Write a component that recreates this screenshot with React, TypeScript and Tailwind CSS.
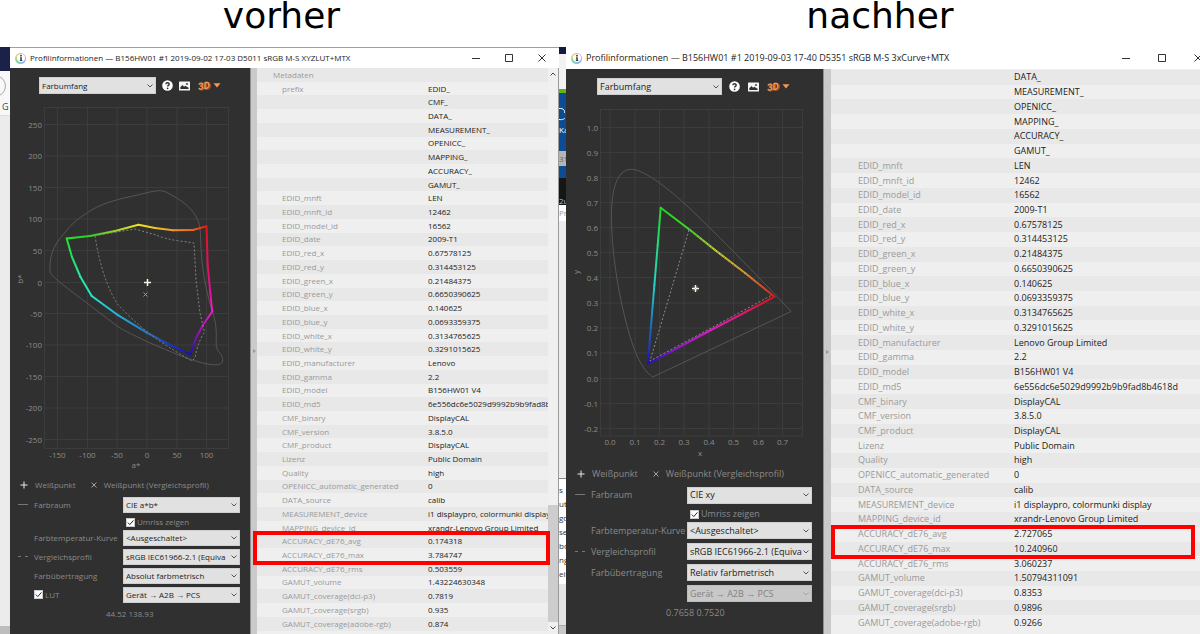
import React from 'react';
import clsx from 'clsx';

type MetaRow = [string, string];
type Point = [number, number];
type Variant = 'before' | 'after';

const PREFIXES = ['EDID_', 'CMF_', 'DATA_', 'MEASUREMENT_', 'OPENICC_', 'MAPPING_', 'ACCURACY_', 'GAMUT_'];

const EDID_ROWS: MetaRow[] = [
  ['EDID_mnft', 'LEN'],
  ['EDID_mnft_id', '12462'],
  ['EDID_model_id', '16562'],
  ['EDID_date', '2009-T1'],
  ['EDID_red_x', '0.67578125'],
  ['EDID_red_y', '0.314453125'],
  ['EDID_green_x', '0.21484375'],
  ['EDID_green_y', '0.6650390625'],
  ['EDID_blue_x', '0.140625'],
  ['EDID_blue_y', '0.0693359375'],
  ['EDID_white_x', '0.3134765625'],
  ['EDID_white_y', '0.3291015625'],
];

const PROFILE_ROWS: MetaRow[] = [
  ['EDID_gamma', '2.2'],
  ['EDID_model', 'B156HW01 V4'],
  ['EDID_md5', '6e556dc6e5029d9992b9b9fad8b4618d'],
  ['CMF_binary', 'DisplayCAL'],
  ['CMF_version', '3.8.5.0'],
  ['CMF_product', 'DisplayCAL'],
  ['Lizenz', 'Public Domain'],
  ['Quality', 'high'],
  ['OPENICC_automatic_generated', '0'],
  ['DATA_source', 'calib'],
  ['MEASUREMENT_device', 'i1 displaypro, colormunki display'],
  ['MAPPING_device_id', 'xrandr-Lenovo Group Limited'],
];

const BEFORE_ROWS: MetaRow[] = [
  ['Metadaten', ''],
  ...PREFIXES.map((prefix, i): MetaRow => [i === 0 ? 'prefix' : '', prefix]),
  ...EDID_ROWS,
  ['EDID_manufacturer', 'Lenovo'],
  ...PROFILE_ROWS,
  ['ACCURACY_dE76_avg', '0.174318'],
  ['ACCURACY_dE76_max', '3.784747'],
  ['ACCURACY_dE76_rms', '0.503559'],
  ['GAMUT_volume', '1.43224630348'],
  ['GAMUT_coverage(dci-p3)', '0.7819'],
  ['GAMUT_coverage(srgb)', '0.935'],
  ['GAMUT_coverage(adobe-rgb)', '0.874'],
];

const AFTER_ROWS: MetaRow[] = [
  ...PREFIXES.slice(2).map((prefix): MetaRow => ['', prefix]),
  ...EDID_ROWS,
  ['EDID_manufacturer', 'Lenovo Group Limited'],
  ...PROFILE_ROWS,
  ['ACCURACY_dE76_avg', '2.727065'],
  ['ACCURACY_dE76_max', '10.240960'],
  ['ACCURACY_dE76_rms', '3.060237'],
  ['GAMUT_volume', '1.50794311091'],
  ['GAMUT_coverage(dci-p3)', '0.8353'],
  ['GAMUT_coverage(srgb)', '0.9896'],
  ['GAMUT_coverage(adobe-rgb)', '0.9266'],
];

const InfoIcon = () => (
  <span className="grid size-[11px] shrink-0 place-items-center rounded-full bg-[conic-gradient(#e8a0a0,#e6a0e0,#9a9af0,#80c8e8,#80dc90,#d8d880,#e8a0a0)]">
    <svg viewBox="0 0 8 8" className="size-2 rounded-full bg-white">
      <circle cx="4" cy="1.7" r="0.9" fill="#333" />
      <path d="M3 3.2h1.8v3H5.4v.8H2.7v-.8h.6V4H3z" fill="#333" />
    </svg>
  </span>
);

const WindowButtons = ({ variant }: { variant: Variant }) => {
  const button = clsx('grid h-full place-items-center', variant === 'before' ? 'w-[33px]' : 'w-9');
  const icon = 'size-2 fill-none stroke-[#333]';
  return (
    <div className={clsx('ml-auto flex h-full shrink-0', variant === 'before' ? 'mr-px' : '-mr-4')}>
      <button type="button" aria-label="Minimieren" className={button}>
        <svg viewBox="0 0 8 8" className={icon}><path d="M0 4.5h8" /></svg>
      </button>
      <button type="button" aria-label="Maximieren" className={button}>
        <svg viewBox="0 0 8 8" className={icon}><path d="M.5.5h7v7h-7z" /></svg>
      </button>
      <button type="button" aria-label="Schließen" className={button}>
        <svg viewBox="0 0 8 8" className={icon}><path d="M.5.5l7 7M7.5.5l-7 7" /></svg>
      </button>
    </div>
  );
};

const Select = ({
  id, value, label, disabled, className,
}: {
  id: string;
  value: string;
  label?: string;
  disabled?: boolean;
  className?: string;
}) => (
  <div className={clsx('relative', className)}>
    <select
      id={id}
      aria-label={label}
      disabled={disabled}
      className={clsx(
        'block size-full appearance-none border pl-[2px] text-[length:inherit] opacity-100',
        disabled ? 'border-[#bcbcbc] bg-[#c8c8c8] text-[#838383]' : 'border-[#cfcfcf] bg-[#e1e1e1] text-[#1c1c1c]',
      )}
    >
      <option>{value}</option>
    </select>
    <svg
      viewBox="0 0 6 4"
      className={clsx(
        'pointer-events-none absolute top-1/2 right-[3px] h-1 w-[6px] -translate-y-1/2 fill-none',
        disabled ? 'stroke-[#a5a5a5]' : 'stroke-[#555]',
      )}
    >
      <path d="M.5.5L3 3L5.5.5" />
    </svg>
  </div>
);

const Checkbox = ({ label, className }: { label: string; className?: string }) => (
  <label className={clsx('flex items-center gap-[2px]', className)}>
    <span className="grid size-[9px]">
      <input
        type="checkbox"
        defaultChecked
        className="col-start-1 row-start-1 size-full appearance-none border border-[#ccc] bg-white"
      />
      <svg viewBox="0 0 9 9" className="pointer-events-none col-start-1 row-start-1 size-full fill-none stroke-[#222]">
        <path d="M1.8 4.6l2 2l3.6-4.2" />
      </svg>
    </span>
    {label}
  </label>
);

const Toolbar = ({ variant }: { variant: Variant }) => {
  const before = variant === 'before';
  return (
    <div className={clsx('mt-[9px] flex h-[17px] items-center', before ? 'pl-[29px]' : 'pl-[31px]')}>
      <Select
        id={`${variant}-view`}
        label="Ansicht"
        value="Farbumfang"
        className={before ? 'h-[17px] w-[117px]' : 'h-[17px] w-[125px]'}
      />
      <button type="button" aria-label="Hilfe" className={before ? 'ml-[6px]' : 'ml-[7px]'}>
        <svg viewBox="0 0 11 11" className="size-[11px]">
          <circle cx="5.5" cy="5.5" r="5.3" fill="#fff" />
          <path d="M3.9 4.3c0-2.2 3.3-2.1 3.3-.1c0 1.2-1.6 1.2-1.6 2.3" fill="none" stroke="#303030" strokeWidth="1.4" />
          <circle cx="5.6" cy="8.3" r=".9" fill="#303030" />
        </svg>
      </button>
      <button type="button" aria-label="Bild speichern" className={before ? 'ml-[6px]' : 'ml-2'}>
        <svg viewBox="0 0 11 10" className="h-[10px] w-[11px]">
          <rect x="0" y="0.5" width="11" height="9" rx=".6" fill="#f4f4f4" />
          <path d="M1.3 8V6.3l2.2-2.2l1.6 1.6l1.1-1l3.4 2V8z" fill="#303030" />
          <circle cx="8" cy="3" r=".9" fill="#303030" />
        </svg>
      </button>
      <button type="button" aria-label="3D-Ansicht" className="ml-[9px] flex items-center gap-[2px]">
        <svg viewBox="0 0 12 12" className="size-3 overflow-visible font-['Roboto',sans-serif]">
          <g fontSize="10" fontWeight="700" fontStyle="italic" transform="rotate(-8 6 6)">
            <text x="0" y="10" fill="#a85324">3D</text>
            <text x="-1" y="9" fill="#f39a5c">3D</text>
          </g>
        </svg>
        <svg viewBox="0 0 8 5" className="h-[5px] w-2"><path d="M.5.3h7L4 4.6z" fill="#f59a4e" /></svg>
      </button>
    </div>
  );
};

const Grid = ({
  xs, ys, box,
}: {
  xs: number[];
  ys: number[];
  box: [number, number, number, number];
}) => {
  const [left, top, right, bottom] = box;
  return (
    <g fill="none" stroke="#3c3c3c">
      <rect x={left} y={top} width={right - left} height={bottom - top} />
      {xs.map((x) => <path key={x} d={`M${x} ${top}V${bottom}`} />)}
      {ys.map((y) => <path key={y} d={`M${left} ${y}H${right}`} />)}
    </g>
  );
};

// One stroke per stretch, each fading between the colours of its two ends
const GamutOutline = ({ id, points, colors }: { id: string; points: Point[]; colors: string[] }) => (
  <g strokeWidth="2" strokeLinecap="round">
    {points.map(([x1, y1], i) => {
      const next = (i + 1) % points.length;
      const [x2, y2] = points[next];
      return (
        <g key={i}>
          <linearGradient id={`${id}-${i}`} gradientUnits="userSpaceOnUse" x1={x1} y1={y1} x2={x2} y2={y2}>
            <stop offset="0" stopColor={colors[i]} />
            <stop offset="1" stopColor={colors[next]} />
          </linearGradient>
          <path d={`M${x1} ${y1}L${x2} ${y2}`} stroke={`url(#${id}-${i})`} />
        </g>
      );
    })}
  </g>
);

const AB_XS = [57.5, 87.5, 117, 147, 177, 206.5];
const AB_YS = [124.5, 156, 187.5, 219, 250.5, 282.5, 313.5, 345, 376.5, 408, 439.5];
const AB_POINTS: Point[] = [
  [66.7, 238.5], [90, 236], [115, 231], [138.5, 224.8], [155, 228], [173, 230.3], [193, 230], [206.5, 226.3],
  [207.7, 265], [210.2, 292], [212.3, 311.5], [203, 325], [196, 338], [190.5, 354.3],
  [168, 344], [146.7, 332.7], [116.7, 314.3], [91.7, 296], [80.5, 277], [72, 257],
];
const AB_COLORS = [
  '#25e22e', '#2fd21f', '#9ad42c', '#f2e21f', '#edc426', '#f0962a', '#e8641c', '#e01515',
  '#e0105c', '#e2109a', '#f01cc0', '#b414b8', '#7a12b4', '#1c10b0',
  '#1a3cc0', '#1a78c8', '#22b4d8', '#22e8c8', '#28e89a', '#22e060',
];

const AbChart = () => (
  <svg viewBox="10 94 240 383" className="h-[383px] w-full shrink-0 font-['Open_Sans',sans-serif] text-[8px]">
    <Grid xs={AB_XS} ys={AB_YS} box={[44.5, 107.5, 228.5, 448.5]} />
    <g fill="#8c8c8c">
      <g textAnchor="end">
        {AB_YS.map((y, i) => <text key={y} x="42" y={y + 3}>{250 - i * 50}</text>)}
      </g>
      <g textAnchor="middle">
        {AB_XS.map((x, i) => <text key={x} x={x} y="458">{i * 50 - 150}</text>)}
        <text x="136" y="468">a*</text>
        <text x="21" y="281" transform="rotate(-90 21 279)">b*</text>
      </g>
    </g>
    <path
      d="M50 271C49 250 57 242 67 230C74 221 81 217 90 211C107 200 127 198 147 192.700C158 190 162 190 168 193C183 201 190 207 195 215C200 223 200 228 200.500 235C201 262 204 280 209 300C211 310 215 316 216 328C217 340 215 345 217.500 350C222 355 223 358 222.500 361C222 365 217 365 210 364.500C190 361 172 352 147 341.700C132 334 128 333 117 326C90 305 73 293 57 280C53 276 50 274 50 271Z"
      fill="none"
      stroke="#555"
    />
    <GamutOutline id="ab" points={AB_POINTS} colors={AB_COLORS} />
    <path
      d="M95 235.700Q98 256 103.500 273Q109 290 117 303.500Q133 321 150 334T192 361L195 358Q197 344 204.500 332L200 313L196 280L194 243L180 241Q165 239 156 235L135 229Z"
      fill="none"
      stroke="#858585"
      strokeDasharray="2 2"
    />
    <path d="M144 282.500h7M147.500 279v7" stroke="#f5f5e8" strokeWidth="1.5" />
    <path d="M143.500 292.500l4 4M147.500 292.500l-4 4" stroke="#9a9a9a" />
  </svg>
);

const XY_XS = [610, 635, 659.5, 684, 709, 733.5, 758.5, 782.5];
const XY_YS = [127.5, 152.5, 177.5, 202.5, 227.5, 252.5, 277.5, 303, 328, 353, 378.5, 403.5, 428.5];
const XY_POINTS: Point[] = [
  [660.7, 207.8], [690, 230], [715, 250], [745, 273], [774.5, 296.7],
  [740, 315], [711, 330], [672, 351], [648, 363.5], [650, 338], [654.4, 285], [657.7, 245],
];
const XY_COLORS = [
  '#1fd626', '#3edc22', '#c8dc32', '#e09430', '#e01212',
  '#e2147c', '#dc1cc4', '#7c18c4', '#2010b4', '#1c50c0', '#22d4c8', '#20dc7c',
];

const XyChart = () => (
  <svg viewBox="566 95 257 371" className="h-[371px] w-full shrink-0 font-['Open_Sans',sans-serif] text-[8px]">
    <Grid xs={XY_XS} ys={XY_YS} box={[600.5, 109.5, 802.5, 436]} />
    <g fill="#8c8c8c">
      <g textAnchor="end">
        {XY_YS.map((y, i) => <text key={y} x="598" y={y + 3}>{((10 - i) / 10).toFixed(1)}</text>)}
      </g>
      <g textAnchor="middle">
        {XY_XS.map((x, i) => <text key={x} x={x} y="445">{(i / 10).toFixed(1)}</text>)}
        <text x="700" y="456">x</text>
        <text x="577" y="274" transform="rotate(-90 577 272)">y</text>
      </g>
    </g>
    <path
      d="M652.700 377C642 370 634 353 626 322C618 291 611 250 611.500 212C612 189 617 170 630.700 169.300C643 169 665 186 685 204C709 226 760 278 791 311.500Z"
      fill="none"
      stroke="#555"
    />
    <GamutOutline id="xy" points={XY_POINTS} colors={XY_COLORS} />
    <g fill="none" strokeDasharray="2 2">
      <path d="M689 230L650 361L772 295" stroke="#8a8a8a" />
      <path d="M689 229.500L772 295" stroke="#6f6f4a" strokeWidth=".7" />
    </g>
    <path d="M692 288.500h7M695.500 285v7" stroke="#f5f5e8" strokeWidth="1.500" />
    <path d="M693.500 286.500l4 4M697.500 286.500l-4 4" stroke="#b5b5b5" strokeWidth=".7" />
  </svg>
);

const Legend = ({ variant }: { variant: Variant }) => (
  <div className={clsx('flex h-4 shrink-0 items-center', variant === 'before' ? 'pl-[10px]' : 'pl-[11px]')}>
    <svg viewBox="0 0 8 8" className="mr-[7px] size-2 stroke-[#e8e8e8]"><path d="M.5 4h7M4 .5v7" /></svg>
    Weißpunkt
    <svg viewBox="0 0 8 8" className="mr-[6px] ml-[14px] size-2 stroke-[#a0a0a0]">
      <path d="M1.500 1.500l5 5M6.500 1.500l-5 5" />
    </svg>
    Weißpunkt (Vergleichsprofil)
  </div>
);

const SettingRow = ({
  id, label, value, line, variant,
}: {
  id: string;
  label: string;
  value: string;
  line?: 'solid' | 'dashed';
  variant: Variant;
}) => (
  <>
    <svg viewBox="0 0 10 2" className="h-[2px] w-[10px] stroke-[#777]">
      {line && <path d="M0 .5h10" strokeDasharray={line === 'dashed' ? '3 4' : undefined} />}
    </svg>
    <label htmlFor={id}>{label}</label>
    <Select id={id} value={value} className={variant === 'before' ? 'h-4' : 'h-[17px]'} />
  </>
);

const ProfilePanel = ({ variant }: { variant: Variant }) => {
  const before = variant === 'before';
  return (
    <section className={clsx('flex shrink-0 flex-col bg-[#303030] text-[#8a8a8a]', before ? 'w-60' : 'w-[257px]')}>
      <Toolbar variant={variant} />
      {before ? <AbChart /> : <XyChart />}
      <Legend variant={variant} />
      <form
        className={clsx(
          'grid items-center',
          before
            ? 'grid-cols-[16px_89px_117px] grid-rows-[23px_12px_repeat(4,19px)] pl-2'
            : 'grid-cols-[16px_96px_125px] grid-rows-[26px_12px_repeat(4,21px)] pl-[9px]',
        )}
      >
        <SettingRow
          id={`${variant}-space`}
          label="Farbraum"
          value={before ? 'CIE a*b*' : 'CIE xy'}
          line="solid"
          variant={variant}
        />
        <Checkbox label="Umriss zeigen" className="col-start-3 pl-[3px]" />
        <SettingRow id={`${variant}-curve`} label="Farbtemperatur-Kurve" value="<Ausgeschaltet>" variant={variant} />
        <SettingRow
          id={`${variant}-compare`}
          label="Vergleichsprofil"
          value="sRGB IEC61966-2.1 (Equiva"
          line="dashed"
          variant={variant}
        />
        <SettingRow
          id={`${variant}-intent`}
          label="Farbübertragung"
          value={before ? 'Absolut farbmetrisch' : 'Relativ farbmetrisch'}
          variant={variant}
        />
        {before && <Checkbox label="LUT" className="col-start-2" />}
        <Select
          id={`${variant}-direction`}
          label="Richtung"
          value="Gerät → A2B → PCS"
          disabled={!before}
          className={before ? 'col-start-3 h-4' : 'col-start-3 h-[17px]'}
        />
      </form>
      <p className={before ? 'pt-1 pl-24' : 'pt-[3px] pl-[100px]'}>{before ? '44.52 138.93' : '0.7658 0.7520'}</p>
    </section>
  );
};

const Sash = ({ variant }: { variant: Variant }) => (
  <div
    className={clsx(
      'flex shrink-0 items-center justify-center border-l border-[#8f8f8f] bg-[#cacaca]',
      variant === 'before' ? 'w-[7px]' : 'w-2',
    )}
  >
    <svg viewBox="0 0 3 4" className="h-1 w-[3px]"><path d="M0 0l3 2l-3 2z" fill="#999" /></svg>
  </div>
);

const MetaTable = ({ rows, variant }: { rows: MetaRow[]; variant: Variant }) => {
  const before = variant === 'before';
  return (
    <div className={clsx('min-w-0 flex-1 bg-[#efefef]', before ? 'pb-[3px]' : 'pt-px pb-1')}>
      <table className="size-full table-fixed border-collapse">
        <colgroup>
          <col className={before ? 'w-[171px]' : 'w-[183px]'} />
          <col />
        </colgroup>
        <tbody>
          {rows.map(([name, value], i) => (
            <tr key={i} className="relative odd:bg-[#e8e8e8]">
              <th
                scope="row"
                className={clsx(
                  'p-0 text-left font-normal text-[#9a9a9a]',
                  name === 'Metadaten' ? 'pl-4' : before ? 'pl-[25px]' : 'pl-[27px]',
                )}
              >
                {name}
                {name === 'ACCURACY_dE76_avg' && (
                  <span
                    className={clsx(
                      'pointer-events-none absolute z-10 h-[34px] border-4 border-[#fe0000]',
                      before ? '-top-[3px] -right-[2px] -left-1' : '-top-[2px] right-[5px] left-0',
                    )}
                  />
                )}
              </th>
              <td className="overflow-hidden p-0 whitespace-nowrap text-[#222]">{value}</td>
            </tr>
          ))}
        </tbody>
      </table>
    </div>
  );
};

const Scrollbar = () => (
  <div className="flex w-[11px] shrink-0 flex-col items-center border-r border-[#9a9a9a] bg-[#f0f0f0] py-1">
    <svg viewBox="0 0 6 4" className="h-1 w-[6px] fill-none stroke-[#444]"><path d="M.5 3.500L3 1L5.500 3.500" /></svg>
    <div className="w-full flex-[431]" />
    <div className="w-full flex-[118] bg-[#cdcdcd]" />
    <svg viewBox="0 0 6 4" className="mt-1 h-1 w-[6px] fill-none stroke-[#444]"><path d="M.5.5L3 3L5.500.5" /></svg>
  </div>
);

const ProfileWindow = ({ title, rows, variant }: { title: string; rows: MetaRow[]; variant: Variant }) => {
  const before = variant === 'before';
  return (
    <article
      className={clsx(
        'flex min-w-0 flex-col overflow-hidden leading-[12px]',
        before ? 'border-t border-[#a0a0a0] text-[8px]' : 'text-[9px]',
      )}
    >
      <header
        className={clsx('flex shrink-0 items-center gap-1 bg-white pl-[5px] text-[#222]', before ? 'h-5' : 'h-[22px]')}
      >
        <InfoIcon />
        <h2 className="whitespace-nowrap">{title}</h2>
        <WindowButtons variant={variant} />
      </header>
      <div className="flex min-h-0 flex-1">
        <ProfilePanel variant={variant} />
        <Sash variant={variant} />
        <MetaTable rows={rows} variant={variant} />
        {before && <Scrollbar />}
      </div>
    </article>
  );
};

// Slivers of the desktop that stay visible beside the two windows
const LeftDesktop = () => (
  <aside className="flex flex-col overflow-hidden bg-[#ececec] text-[9px]">
    <div className="h-6 bg-[#1b2148]" />
    <div className="relative h-[45px] border-b border-[#ddd] bg-[#f8f8f8]">
      <span className="absolute top-1 -left-4 size-[22px] rounded-full border border-[#aaa]" />
      <span className="absolute bottom-1 left-[2px] leading-none text-[#444]">G</span>
    </div>
    <div className="flex-1" />
    <div className="h-2 bg-[#bdbdbd]" />
  </aside>
);

const MiddleDesktop = () => (
  <aside className="flex flex-col overflow-hidden bg-[#ececec] text-[8px]">
    <div className="h-[7px] bg-[#141a3c]" />
    <div className="h-[35px] bg-[#f2f2f2]" />
    <div className="h-1 bg-[#5cb80e]" />
    <div className="flex h-[58px] flex-col bg-[#0d4c92] text-white">
      <svg viewBox="0 0 6 14" className="mt-[14px] h-[14px] w-[6px] fill-none stroke-white"><path d="M0 1.500C5 1 6 4 5.500 6M0 12.500C4 13 5 12 6 11" /></svg>
      <span className="mt-1 leading-[10px]">Ka</span>
    </div>
    <div className="h-[15px] bg-[#b5b5b5] leading-[15px] text-[#666]">31</div>
    <div className="h-3 bg-[#0d4c92]" />
    <div className="flex h-[27px] items-end bg-[#161616] leading-[8px] text-[#bbb]">2u</div>
    <div className="h-4 bg-white leading-4 text-[#999]">Pr</div>
    <div className="flex-1" />
    <ul className="h-[106px] border-t border-[#888] bg-white pt-1 leading-[14px] text-[#333]">
      {['s', 'ut', 'go', 'se', 'bo', 'ng', 'eit'].map((text) => <li key={text}>{text}</li>)}
    </ul>
    <div className="h-[42px] border-b border-[#aaa] bg-[#e4e4e4]" />
    <div className="h-2 bg-[#c8c8c8]" />
  </aside>
);

const heading = "pr-[6px] text-center font-['DejaVu_Sans',sans-serif] text-[36px] leading-8 text-black";

export default function App() {
  return (
    <main className="grid h-screen min-h-[634px] grid-cols-[10px_549fr_7px_634fr] grid-rows-[47px_1fr] overflow-hidden bg-white font-['Open_Sans',sans-serif]">
      <h1 className={clsx(heading, 'col-start-2')}>vorher</h1>
      <h1 className={clsx(heading, 'col-start-4')}>nachher</h1>
      <LeftDesktop />
      <ProfileWindow
        title="Profilinformationen — B156HW01 #1 2019-09-02 17-03 D5011 sRGB M-S XYZLUT+MTX"
        rows={BEFORE_ROWS}
        variant="before"
      />
      <MiddleDesktop />
      <ProfileWindow
        title="Profilinformationen — B156HW01 #1 2019-09-03 17-40 D5351 sRGB M-S 3xCurve+MTX"
        rows={AFTER_ROWS}
        variant="after"
      />
    </main>
  );
}
